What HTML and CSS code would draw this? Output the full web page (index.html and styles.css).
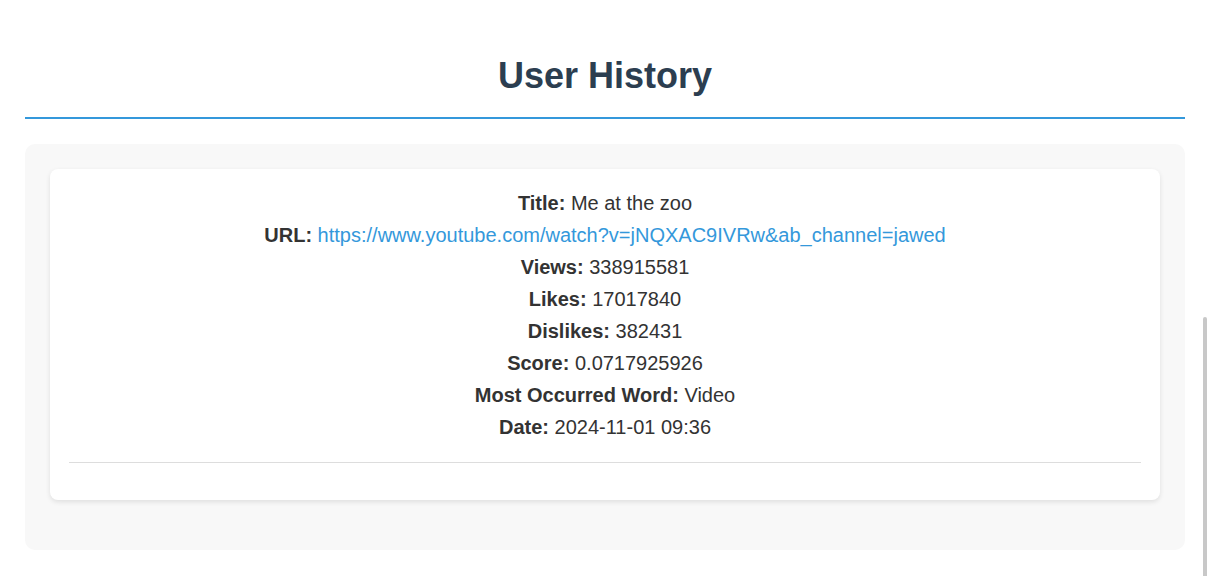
FILE: index.html
```html
<!DOCTYPE html>
<html lang="en">
<head>
<meta charset="utf-8">
<title>User History</title>
<link rel="stylesheet" href="styles.css">
</head>
<body>
<div class="page">
  <h1 class="page-title">User History</h1>
  <section class="history">
    <article class="entry">
      <p class="row"><strong>Title:</strong> Me at the zoo</p>
      <p class="row"><strong>URL:</strong> <a class="link" href="#">https://www.youtube.com/watch?v=jNQXAC9IVRw&amp;ab_channel=jawed</a></p>
      <p class="row"><strong>Views:</strong> 338915581</p>
      <p class="row"><strong>Likes:</strong> 17017840</p>
      <p class="row"><strong>Dislikes:</strong> 382431</p>
      <p class="row"><strong>Score:</strong> 0.0717925926</p>
      <p class="row"><strong>Most Occurred Word:</strong> Video</p>
      <p class="row"><strong>Date:</strong> 2024-11-01 09:36</p>
      <hr class="divider">
    </article>
  </section>
</div>
<div class="scroll-thumb"></div>
</body>
</html>
```
FILE: styles.css
```css
html, body {
  margin: 0;
  padding: 0;
  background: #ffffff;
}
body {
  font-family: "Liberation Sans", Arial, sans-serif;
  color: #333333;
}
.page {
  padding: 0 25px;
}
.page-title {
  margin: 0 0 25px;
  padding: 55px 0 20px;
  font-size: 36px;
  line-height: 42px;
  font-weight: bold;
  text-align: center;
  color: #2c3e50;
  border-bottom: 2px solid #3498db;
}
.history {
  background: #f8f8f8;
  border-radius: 10px;
  padding: 25px 25px 50px;
}
.entry {
  background: #ffffff;
  border-radius: 8px;
  box-shadow: 0 2px 5px rgba(0, 0, 0, 0.1);
  padding: 18px 19px 18px;
  text-align: center;
}
.row {
  margin: 0;
  font-size: 20px;
  line-height: 32px;
}
.row strong {
  font-weight: bold;
}
.link {
  color: #3498db;
  text-decoration: none;
}
.divider {
  border: 0;
  border-top: 1px solid #dddddd;
  margin: 19px 0 19px;
}
.scroll-thumb {
  position: fixed;
  right: 3px;
  top: 317px;
  width: 4px;
  height: 262px;
  background: #c8c8c8;
  border-radius: 2px;
}
```
